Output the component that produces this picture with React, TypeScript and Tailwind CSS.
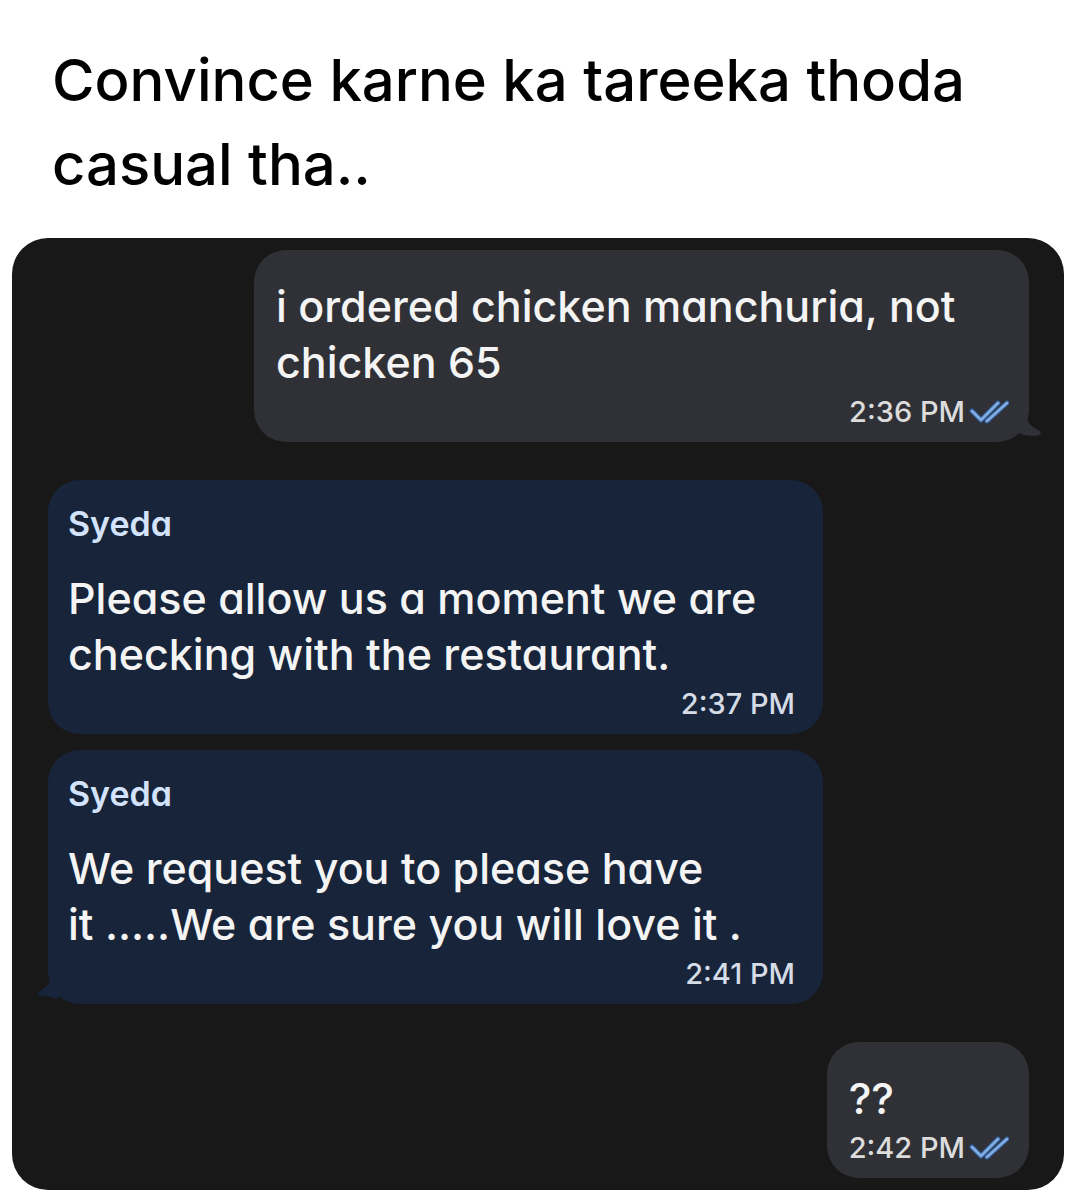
interface Message {
  id: number;
  sender?: string;
  lines: string[];
  time: string;
  tail?: boolean;
}

const outgoing: Message[] = [
  { id: 1, lines: ["i ordered chicken manchuria, not", "chicken 65"], time: "2:36 PM", tail: true },
  { id: 2, lines: ["??"], time: "2:42 PM" },
];

const incoming: Message[] = [
  {
    id: 3,
    sender: "Syeda",
    lines: ["Please allow us a moment we are", "checking with the restaurant."],
    time: "2:37 PM",
  },
  {
    id: 4,
    sender: "Syeda",
    lines: ["We request you to please have", "it .....We are sure you will love it ."],
    time: "2:41 PM",
    tail: true,
  },
];

function ReadTicks() {
  return (
    <svg viewBox="0 0 40 26" className="ml-1 h-[26px] w-10 shrink-0" fill="none" role="img" aria-label="Read">
      <path d="M3 12L12 21L29 4M18 22L38 4" stroke="#2c568f" strokeWidth="5" strokeLinecap="round" strokeLinejoin="round" />
      <path d="M3 12L12 21L29 4M18 22L38 4" stroke="#7fabe0" strokeWidth="3" strokeLinecap="round" strokeLinejoin="round" />
    </svg>
  );
}

function Outgoing({ message }: { message: Message }) {
  return (
    <article className="relative rounded-[32px] bg-[#303136] pt-7 pr-5 pb-2 pl-[22px] text-[#f4f4f4]">
      {message.lines.map((line) => (
        <p key={line} className="text-[43px] leading-14 font-medium whitespace-nowrap">{line}</p>
      ))}
      <div className="flex items-center justify-end text-[29px] leading-11 font-medium text-[#dcdcdc]">
        <time>{message.time}</time>
        <ReadTicks />
      </div>
      {message.tail && (
        <svg viewBox="0 0 40 30" className="absolute -right-3 bottom-0 h-[30px] w-10" aria-hidden="true">
          <path d="M27 8C28 13 32 15 37 18C42 21 40 23 34 24C28 24 24 23 20 22L10 18Z" fill="#303136" />
        </svg>
      )}
    </article>
  );
}

function Incoming({ message }: { message: Message }) {
  return (
    <article className="relative rounded-[32px] bg-[#17243a] px-5 pt-6 pb-2 text-[#f4f4f4]">
      <h2 className="mb-[26px] text-[34px] leading-10 font-semibold text-[#d3e3fb]">{message.sender}</h2>
      {message.lines.map((line) => (
        <p key={line} className="text-[43px] leading-14 font-medium whitespace-nowrap">{line}</p>
      ))}
      <time className="block pr-2 text-right text-[29px] leading-11 font-medium text-[#d5dce6]">
        {message.time}
      </time>
      {message.tail && (
        <svg viewBox="0 0 40 30" className="absolute bottom-0 -left-3 h-[30px] w-10" aria-hidden="true">
          <path d="M13 8C12 12 8 14 4 17C0 20 2 22 7 22C12 22 16 23 20 25L30 18Z" fill="#17243a" />
        </svg>
      )}
    </article>
  );
}

export default function App() {
  return (
    <main className="bg-white px-3 pt-[38px] pb-[10px] font-['Inter',sans-serif]">
      <h1 className="mb-8 pl-10 text-[58px] leading-[84px] font-medium text-black">
        Convince karne ka tareeka thoda
        <br />
        casual tha..
      </h1>
      <section className="flex flex-col rounded-[36px] bg-[#181818] pt-3 pr-[35px] pb-3 pl-9 [font-feature-settings:'cv11']">
        <div className="mb-[38px] w-[775px] max-w-full self-end">
          <Outgoing message={outgoing[0]} />
        </div>
        <div className="mb-[38px] flex w-[775px] max-w-full flex-col gap-4">
          {incoming.map((message) => (
            <Incoming key={message.id} message={message} />
          ))}
        </div>
        <div className="self-end">
          <Outgoing message={outgoing[1]} />
        </div>
      </section>
    </main>
  );
}
